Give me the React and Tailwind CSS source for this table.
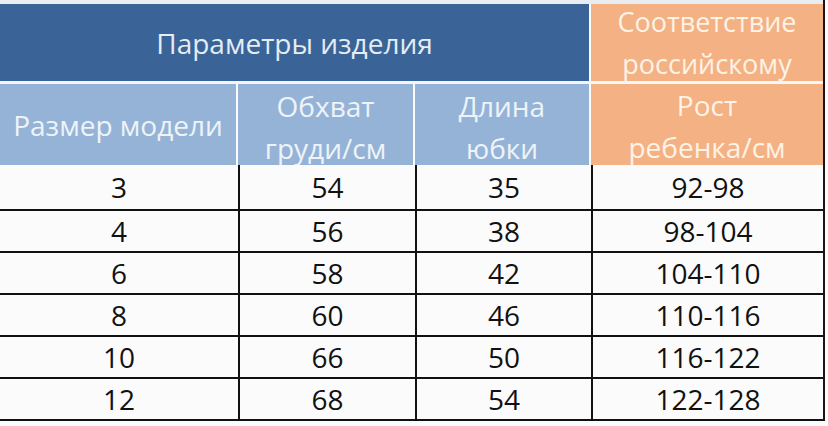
import React from 'react';

const rows = [
  ['3', '54', '35', '92-98'],
  ['4', '56', '38', '98-104'],
  ['6', '58', '42', '104-110'],
  ['8', '60', '46', '110-116'],
  ['10', '66', '50', '116-122'],
  ['12', '68', '54', '122-128'],
];

const App = () => {
  return (
    <div className="w-[828px] h-[426px] overflow-hidden bg-[#fbfbfb] font-['Open_Sans',sans-serif]">
      <div className="w-[825px] flex flex-col border-r-2 border-[#1a1414]">
        <div className="h-[4px] bg-[#e9ecf0]"></div>

        {/* top header */}
        <div className="flex h-[77px] gap-[2px] text-[28px]">
          <div className="w-[589px] bg-[#3a6497] flex items-center justify-center text-[#e4ecf5]">
            Параметры изделия
          </div>
          <div className="flex-1 bg-[#f4b183] flex flex-col items-center justify-center leading-[42px] text-[#fdf3e6] text-[27px]">
            <span>Соответствие</span>
            <span>российскому</span>
          </div>
        </div>

        <div className="h-[3px] bg-[#f2f6f9]"></div>

        {/* second header */}
        <div className="flex h-[81px] gap-[2px] text-[28px] text-[#eef3f8]">
          <div className="w-[236px] bg-[#95b3d7] flex items-center justify-center">
            Размер модели
          </div>
          <div className="w-[175px] bg-[#95b3d7] flex flex-col items-center justify-center pt-[4px] leading-[42px] overflow-hidden">
            <span>Обхват</span>
            <span>груди/см</span>
          </div>
          <div className="w-[174px] bg-[#95b3d7] flex flex-col items-center justify-center pt-[4px] leading-[42px] overflow-hidden">
            <span>Длина</span>
            <span>юбки</span>
          </div>
          <div className="flex-1 bg-[#f4b183] flex flex-col items-center justify-center pt-[2px] leading-[42px] text-[#fdf3e6] overflow-hidden">
            <span>Рост</span>
            <span>ребенка/см</span>
          </div>
        </div>

        {/* data rows */}
        <div className="flex flex-col text-[28px] text-[#111]">
          {rows.map((r, i) => (
            <div key={i} className={`flex border-b-2 border-[#111] ${i === 0 ? 'h-[46px]' : 'h-[42px]'}`}>
              <div className="w-[240px] border-r-2 border-[#111] flex items-center justify-center">{r[0]}</div>
              <div className="w-[177px] border-r-2 border-[#111] flex items-center justify-center">{r[1]}</div>
              <div className="w-[176px] border-r-2 border-[#111] flex items-center justify-center">{r[2]}</div>
              <div className="flex-1 flex items-center justify-center">{r[3]}</div>
            </div>
          ))}
        </div>
      </div>
    </div>
  );
};

export default App;
